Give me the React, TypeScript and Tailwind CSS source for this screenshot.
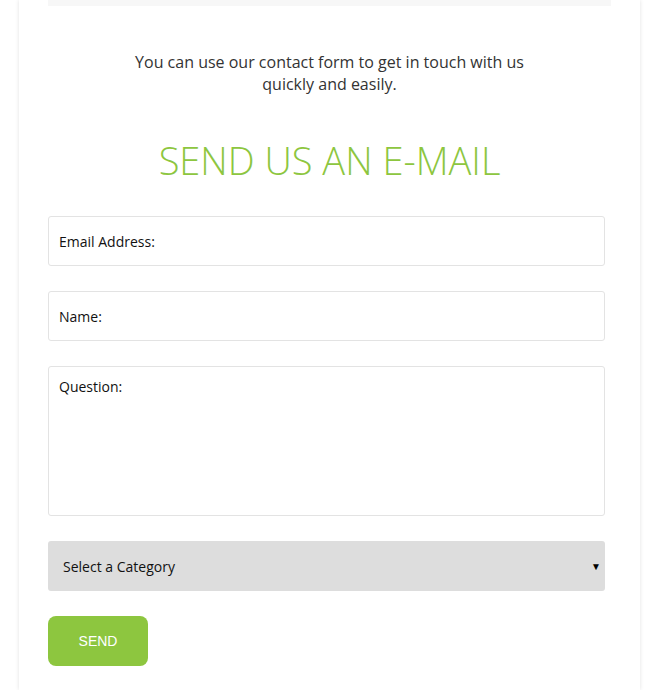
import React from "react";

const field =
  "block w-[557px] rounded-[3px] border border-[#e3e3e3] bg-white px-[10px] text-[14px] text-[#111] outline-none placeholder:text-[#111]";

export default function App() {
  return (
    <div className="min-h-[690px] bg-white font-['Open_Sans',sans-serif]">
      <div className="ml-[19px] w-[621px] min-h-[690px] bg-white px-[29px] shadow-[0_0_4px_rgba(0,0,0,0.12)]">
        <div className="h-[6px] bg-[#f7f7f7]" />

        <p className="mx-auto mt-[45px] w-[420px] text-center text-[16px] leading-[22px] text-[#333]">
          You can use our contact form to get in touch with us quickly and easily.
        </p>

        <h2 className="mt-[43px] text-center text-[38px] font-light leading-[44px] text-[#8dc63f]">
          SEND US AN E-MAIL
        </h2>

        <form className="mt-[34px] flex flex-col gap-[25px]" onSubmit={(e) => e.preventDefault()}>
          <input className={`${field} h-[50px]`} placeholder="Email Address:" />
          <input className={`${field} h-[50px]`} placeholder="Name:" />
          <textarea className={`${field} h-[150px] resize-none pt-[10px] leading-[20px]`} placeholder="Question:" />
          <div className="relative w-[557px]">
            <select className="block h-[50px] w-full appearance-none rounded-[3px] bg-[#dddddd] px-[15px] text-[14px] text-[#111] outline-none">
              <option>Select a Category</option>
            </select>
            <span className="pointer-events-none absolute right-[4px] top-1/2 -translate-y-1/2 text-[10px] text-black">▼</span>
          </div>
          <button
            type="submit"
            className="h-[50px] w-[100px] rounded-[8px] bg-[#8dc63f] font-['Liberation_Sans',sans-serif] text-[14px] text-white"
          >
            SEND
          </button>
        </form>
      </div>
    </div>
  );
}
